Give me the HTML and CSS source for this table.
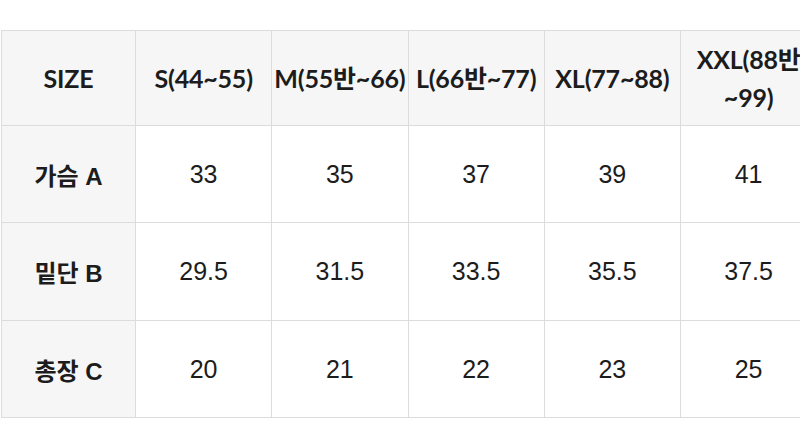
FILE: index.html
```html
<!DOCTYPE html>
<html lang="ko">
<head>
<meta charset="utf-8">
<title>Size</title>
<link rel="stylesheet" href="styles.css">
</head>
<body>
<div class="wrap">
<table class="size-table">
  <colgroup>
    <col class="c-first"><col class="c"><col class="c"><col class="c"><col class="c"><col class="c">
  </colgroup>
  <thead>
    <tr class="head-row">
      <th>SIZE</th>
      <th>S(44~55)</th>
      <th>M(55반~66)</th>
      <th>L(66반~77)</th>
      <th>XL(77~88)</th>
      <th>XXL(88반~99)</th>
    </tr>
  </thead>
  <tbody>
    <tr class="r1">
      <th class="label">가슴 A</th>
      <td>33</td><td>35</td><td>37</td><td>39</td><td>41</td>
    </tr>
    <tr class="r2">
      <th class="label">밑단 B</th>
      <td>29.5</td><td>31.5</td><td>33.5</td><td>35.5</td><td>37.5</td>
    </tr>
    <tr class="r3">
      <th class="label">총장 C</th>
      <td>20</td><td>21</td><td>22</td><td>23</td><td>25</td>
    </tr>
  </tbody>
</table>
</div>
</body>
</html>
```
FILE: styles.css
```css
html, body {
  margin: 0;
  padding: 0;
  background: #ffffff;
  overflow: hidden;
}
.wrap {
  padding: 30px 0 0 1px;
  width: 830px;
}
.size-table {
  border-collapse: collapse;
  table-layout: fixed;
  width: 815.25px;
  color: #1c1c1c;
}
.size-table .c-first {
  width: 134px;
}
.size-table .c {
  width: 136.25px;
}
.size-table th,
.size-table td {
  border: 1px solid #dcdcdc;
  text-align: center;
  vertical-align: middle;
  padding: 0 2px;
}
.head-row th {
  height: 94px;
  background: #f6f6f6;
  font-family: Lato, "Noto Sans CJK KR", sans-serif;
  font-weight: 700;
  font-size: 25px;
  line-height: 38px;
  letter-spacing: -0.2px;
}
.r1 th, .r1 td { height: 96px; }
.r2 th, .r2 td { height: 97px; }
.r3 th, .r3 td { height: 96px; }
.size-table td {
  background: #ffffff;
  font-family: "Liberation Sans", "Noto Sans CJK KR", sans-serif;
  font-weight: 400;
  font-size: 25px;
}
.size-table .label {
  background: #f6f6f6;
  font-family: "Liberation Sans", "Noto Sans CJK KR", sans-serif;
  font-weight: 700;
  font-size: 24px;
}
```
